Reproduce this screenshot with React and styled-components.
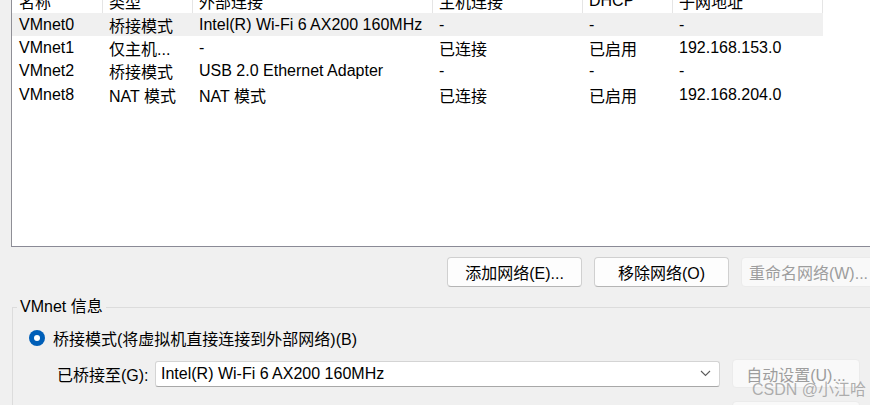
import React from "react";
import styled, { createGlobalStyle, css } from "styled-components";

const GlobalStyle = createGlobalStyle`
  html, body {
    margin: 0;
    padding: 0;
    background: #f0f0f0;
    overflow: hidden;
  }
  body {
    font-family: "Liberation Sans", "Noto Sans CJK SC", sans-serif;
    font-size: 16px;
    color: #000;
  }
`;

const columns = ["名称", "类型", "外部连接", "主机连接", "DHCP", "子网地址"];

const rows = [
  ["VMnet0", "桥接模式", "Intel(R) Wi-Fi 6 AX200 160MHz", "-", "-", "-"],
  ["VMnet1", "仅主机...", "-", "已连接", "已启用", "192.168.153.0"],
  ["VMnet2", "桥接模式", "USB 2.0 Ethernet Adapter", "-", "-", "-"],
  ["VMnet8", "NAT 模式", "NAT 模式", "已连接", "已启用", "192.168.204.0"],
];

const ChevronDown = () => (
  <svg width="11" height="7" viewBox="0 0 11 7">
    <path d="M1 1 L5.5 5.5 L10 1" fill="none" stroke="#5c5c5c" strokeWidth="1.1" />
  </svg>
);

const App = () => {
  return (
    <Window>
      <GlobalStyle />
      <TablePanel>
        <Grid>
          {columns.map((c, i) => (
            <HeadCell key={c} first={i === 0}>
              {c}
            </HeadCell>
          ))}
          {rows.map((r, ri) =>
            r.map((v, ci) => (
              <Cell key={ri + "-" + ci} first={ci === 0} selected={ri === 0}>
                {v}
              </Cell>
            ))
          )}
        </Grid>
      </TablePanel>

      <ButtonBar>
        <Button>添加网络(E)...</Button>
        <Button>移除网络(O)</Button>
        <Button disabled>重命名网络(W)...</Button>
      </ButtonBar>

      <Group>
        <Legend>VMnet 信息</Legend>
        <RadioRow>
          <Radio />
          <span>桥接模式(将虚拟机直接连接到外部网络)(B)</span>
        </RadioRow>
        <BridgeRow>
          <FieldLabel>已桥接至(G):</FieldLabel>
          <Select>
            <span>Intel(R) Wi-Fi 6 AX200 160MHz</span>
            <ChevronDown />
          </Select>
          <SideButton disabled>自动设置(U)...</SideButton>
        </BridgeRow>
        <NextRow>
          <SideButton disabled />
        </NextRow>
      </Group>

      <Watermark>CSDN @小江哈</Watermark>
    </Window>
  );
};

export default App;

const Window = styled.div`
  position: relative;
  width: 870px;
  height: 405px;
  overflow: hidden;
`;

const TablePanel = styled.div`
  box-sizing: border-box;
  width: 900px;
  height: 259px;
  margin: -12px 0 0 11px;
  background: #fff;
  border-left: 1px solid #8f8f96;
  border-bottom: 1px solid #8a8a96;
`;

const Grid = styled.div`
  display: grid;
  grid-template-columns: 91px 90px 240px 150px 90px 150px;
  grid-template-rows: 25px;
  grid-auto-rows: 23.4px;
  width: 811px;
`;

const cellBase = css`
  box-sizing: border-box;
  display: flex;
  align-items: center;
  padding-left: ${({ first }) => (first ? "7px" : "6px")};
  white-space: nowrap;
  overflow: hidden;
`;

const HeadCell = styled.div`
  ${cellBase};
  border-right: 1px solid #e5e5e5;
  color: #000;
`;

const Cell = styled.div`
  ${cellBase};
  background: ${({ selected }) => (selected ? "#f0f0f0" : "transparent")};
`;

const ButtonBar = styled.div`
  display: flex;
  gap: 12px;
  margin-top: 10px;
  padding-left: 447px;
`;

const Button = styled.button`
  box-sizing: border-box;
  flex: 0 0 auto;
  width: 135px;
  height: 30px;
  padding: 0;
  font: inherit;
  color: ${({ disabled }) => (disabled ? "#9d9d9d" : "#000")};
  background: ${({ disabled }) => (disabled ? "#f9f9f9" : "#fdfdfd")};
  border: 1px solid ${({ disabled }) => (disabled ? "#ebebeb" : "#d0d0d0")};
  border-bottom-color: ${({ disabled }) => (disabled ? "#ebebeb" : "#b5b5b5")};
  border-radius: 4px;
  white-space: nowrap;
  text-align: center;
`;

const Group = styled.fieldset`
  box-sizing: border-box;
  width: 900px;
  margin: 10px 0 0 12px;
  padding: 0 0 0 16px;
  border: none;
  border-top: 1px solid #dcdcdc;
  border-left: 1px solid #dcdcdc;
`;

const Legend = styled.legend`
  margin-left: -12px;
  padding: 0 3px;
  line-height: 20px;
`;

const RadioRow = styled.div`
  display: flex;
  align-items: center;
  gap: 8px;
  height: 22px;
  margin-top: 10px;
`;

const Radio = styled.span`
  position: relative;
  box-sizing: border-box;
  width: 16px;
  height: 16px;
  border-radius: 50%;
  background: #005fb8;
  &::after {
    content: "";
    position: absolute;
    left: 5px;
    top: 5px;
    width: 6px;
    height: 6px;
    border-radius: 50%;
    background: #fff;
  }
`;

const BridgeRow = styled.div`
  display: flex;
  align-items: center;
  height: 29px;
  margin-top: 10px;
  padding-left: 28px;
`;

const FieldLabel = styled.span`
  width: 98px;
  white-space: nowrap;
`;

const Select = styled.div`
  box-sizing: border-box;
  display: flex;
  align-items: center;
  justify-content: space-between;
  width: 565px;
  height: 26px;
  padding: 0 8px 0 5px;
  background: #fff;
  border: 1px solid #d4d4d4;
  border-bottom-color: #a8a8a8;
  border-radius: 3px;
`;

const SideButton = styled(Button)`
  width: 128px;
  height: 29px;
  margin-left: 12px;
`;

const NextRow = styled.div`
  display: flex;
  margin-top: 13px;
  padding-left: 691px;
`;

const Watermark = styled.div`
  position: absolute;
  left: 752px;
  top: 380px;
  line-height: 20px;
  font-size: 16px;
  color: rgba(150, 150, 150, 0.75);
  white-space: nowrap;
  pointer-events: none;
`;
